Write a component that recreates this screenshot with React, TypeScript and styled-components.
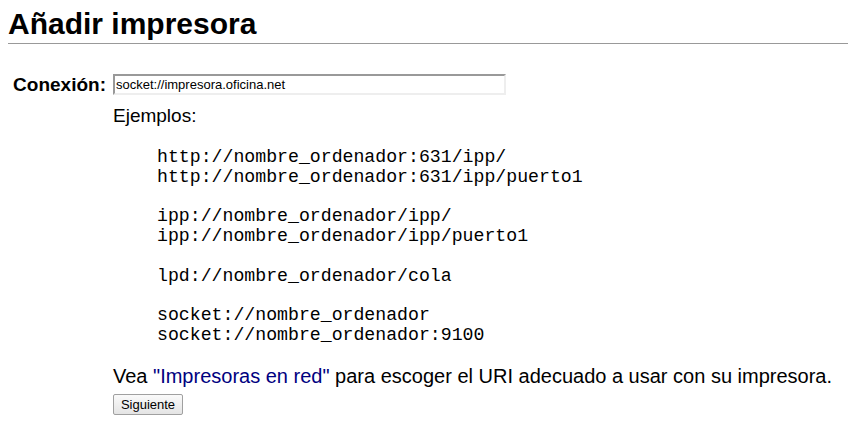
import React from "react";
import styled, { createGlobalStyle } from "styled-components";

const Global = createGlobalStyle`
  html, body { margin: 0; padding: 0; background: #fff; }
  body { font-family: "Liberation Sans", Arial, sans-serif; color: #000; }
`;

const Page = styled.div`
  padding: 8px 0 8px 8px;
`;

const Title = styled.h2`
  margin: 0;
  padding: 0 0 3px 0;
  font-size: 30px;
  font-weight: bold;
  line-height: 32px;
  border-bottom: 1px solid #999;
`;

const Form = styled.div`
  display: grid;
  grid-template-columns: 98px 1fr;
  column-gap: 7px;
  row-gap: 9px;
  margin-top: 30px;
  align-items: start;
`;

const Label = styled.div`
  font-size: 19px;
  font-weight: bold;
  text-align: right;
  line-height: 22px;
`;

const UriInput = styled.input`
  display: block;
  width: 393px;
  height: 21px;
  box-sizing: border-box;
  border: 2px solid #eeeeee;
  border-top-color: #999;
  border-left-color: #999;
  padding: 0 1px;
  font-family: "Liberation Sans", Arial, sans-serif;
  font-size: 13px;
  color: #000;
  outline: none;
`;

const Content = styled.div`
  font-size: 19px;
  line-height: 22px;
`;

const Examples = styled.pre`
  font-family: "Liberation Mono", "Courier New", monospace;
  font-size: 18.2px;
  line-height: 19.8px;
  margin: 21px 0 19px 44px;
  white-space: pre;
`;

const Note = styled.p`
  margin: 0;
  font-size: 20px;
  line-height: 22px;
`;

const Link = styled.a`
  color: #000080;
  text-decoration: none;
`;

const Button = styled.button`
  font-family: "Liberation Sans", Arial, sans-serif;
  font-size: 13px;
  height: 21px;
  width: 70px;
  padding: 0;
  border: 1px solid #a0a0a0;
  border-radius: 2px;
  background: linear-gradient(#fafafa, #e4e4e4);
  color: #000;
`;

const ButtonRow = styled.div`
  margin-top: 5px;
`;

const examples = `http://nombre_ordenador:631/ipp/
http://nombre_ordenador:631/ipp/puerto1

ipp://nombre_ordenador/ipp/
ipp://nombre_ordenador/ipp/puerto1

lpd://nombre_ordenador/cola

socket://nombre_ordenador
socket://nombre_ordenador:9100`;

export default function App() {
  return (
    <>
      <Global />
      <Page>
        <Title>Añadir impresora</Title>
        <Form>
          <Label>Conexión:</Label>
          <div>
            <UriInput defaultValue="socket://impresora.oficina.net" />
          </div>
          <div />
          <Content>
            Ejemplos:
            <Examples>{examples}</Examples>
            <Note>
              Vea <Link href="#">"Impresoras en red"</Link> para escoger el URI adecuado a usar con su impresora.
            </Note>
            <ButtonRow>
              <Button>Siguiente</Button>
            </ButtonRow>
          </Content>
        </Form>
      </Page>
    </>
  );
}
